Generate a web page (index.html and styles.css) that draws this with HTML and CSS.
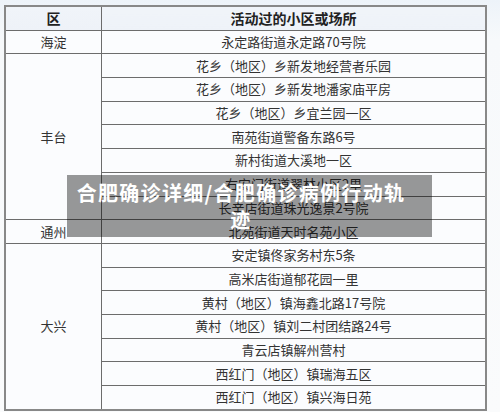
FILE: index.html
```html
<!DOCTYPE html>
<html lang="zh">
<head>
<meta charset="utf-8">
<link rel="stylesheet" href="styles.css">
</head>
<body>
<div class="page">
  <table class="trace">
    <thead>
      <tr><th class="c1">区</th><th>活动过的小区或场所</th></tr>
    </thead>
    <tbody>
      <tr><td class="c1">海淀</td><td>永定路街道永定路70号院</td></tr>
      <tr><td class="c1" rowspan="7">丰台</td><td>花乡（地区）乡新发地经营者乐园</td></tr>
      <tr><td>花乡（地区）乡新发地潘家庙平房</td></tr>
      <tr><td>花乡（地区）乡宜兰园一区</td></tr>
      <tr><td>南苑街道警备东路6号</td></tr>
      <tr><td>新村街道大溪地一区</td></tr>
      <tr><td>右安门街道翠林小区2里</td></tr>
      <tr><td>长辛店街道珠光逸景2号院</td></tr>
      <tr><td class="c1">通州</td><td>北苑街道天时名苑小区</td></tr>
      <tr><td class="c1" rowspan="7">大兴</td><td>安定镇佟家务村东5条</td></tr>
      <tr><td>高米店街道郁花园一里</td></tr>
      <tr><td>黄村（地区）镇海鑫北路17号院</td></tr>
      <tr><td>黄村（地区）镇刘二村团结路24号</td></tr>
      <tr><td>青云店镇解州营村</td></tr>
      <tr><td>西红门（地区）镇瑞海五区</td></tr>
      <tr><td>西红门（地区）镇兴海日苑</td></tr>
    </tbody>
  </table>
  <div class="caption"><div class="caption-text">合肥确诊详细/合肥确诊病例行动轨迹</div></div>
</div>
</body>
</html>
```
FILE: styles.css
```css
html, body {
  margin: 0;
  padding: 0;
}
body {
  width: 500px;
  height: 412px;
  overflow: hidden;
  background: linear-gradient(#edf3f9, #f7f9fb 40px, #fafbfc);
  font-family: "Noto Sans CJK SC", "Noto Sans", sans-serif;
}
.page {
  position: relative;
  padding: 5px 0 0 4px;
}
.trace {
  width: 483px;
  border-collapse: collapse;
  border: 2px solid #888;
  table-layout: fixed;
  color: #333;
  font-size: 13px;
}
.trace th, .trace td {
  border: 1px solid #6c6c6c;
  height: 22.7px;
  padding: 0;
  text-align: center;
  line-height: 22px;
  background: #fbfcfe;
}
.trace th {
  font-weight: bold;
  font-size: 14px;
  background: linear-gradient(#f0f4f9, #eef2f8);
  color: #222;
}
.trace .c1 {
  width: 95px;
}
.caption {
  position: absolute;
  left: 67px;
  top: 175px;
  width: 365px;
  height: 62px;
  background: rgba(0, 0, 0, 0.4);
}
.caption-text {
  width: 332px;
  margin: 4px 0 0 8px;
  color: #fff;
  font-weight: bold;
  font-size: 20px;
  letter-spacing: 1.3px;
  line-height: 27px;
  text-align: center;
}
```
